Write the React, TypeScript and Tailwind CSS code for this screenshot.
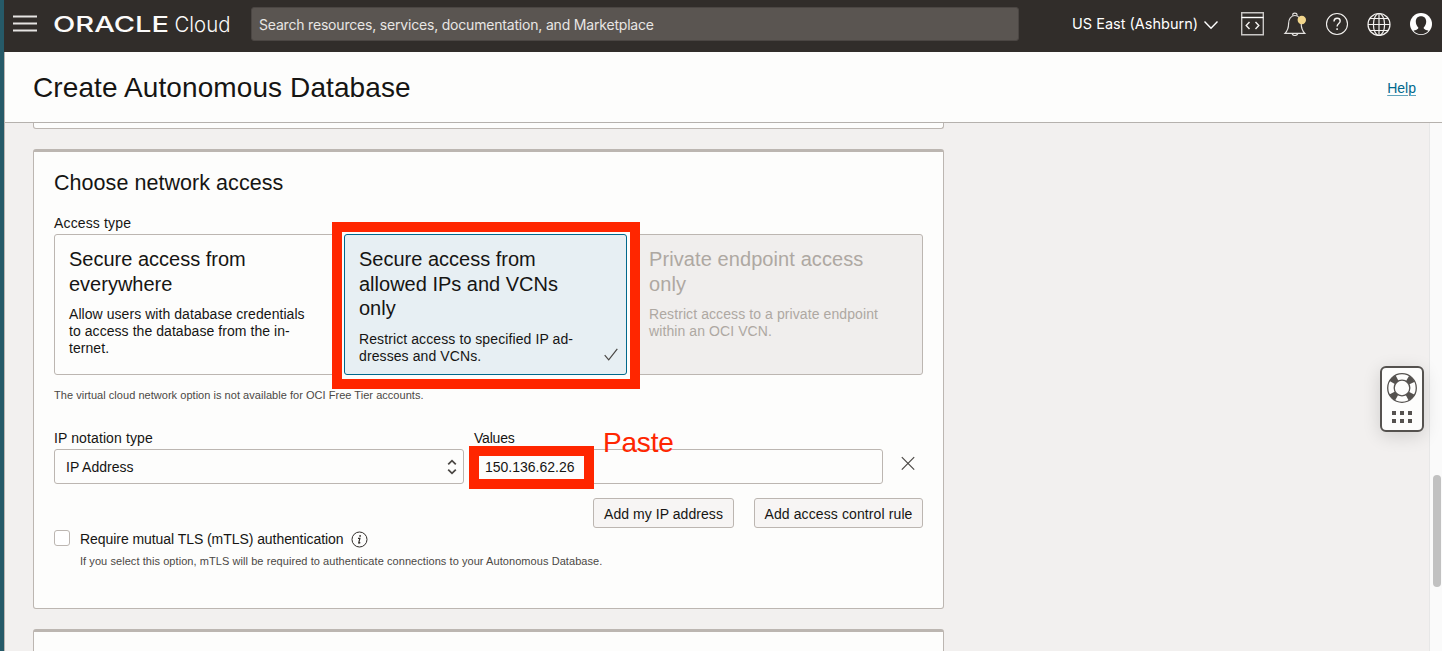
import type { ReactNode } from 'react';

function Logo() {
  return (
    <svg className="overflow-visible" width="182" height="28" viewBox="0 0 182 28" fill="#fcfbfa" role="img" aria-label="Oracle Cloud">
      <text x="0" y="20" textLength="116" lengthAdjust="spacingAndGlyphs" className="font-['Inter'] text-[21px] font-medium">
        ORACLE
      </text>
      <text x="121.500" y="20" textLength="56" lengthAdjust="spacingAndGlyphs" className="font-['Inter'] text-[21.5px] font-light">
        Cloud
      </text>
    </svg>
  );
}

function TopBar() {
  return (
    <header className="flex h-[52px] shrink-0 items-start bg-[#312d2a] pl-[9px] text-white">
      <svg className="mt-3 shrink-0" width="24" height="24" viewBox="0 0 24 24" stroke="#e6e4e2" strokeWidth="2">
        <path d="M0 4.500h24M0 11.500h24M0 18.500h24" />
      </svg>
      <div className="ml-4 mt-3 w-[182px] shrink-0">
        <Logo />
      </div>
      <div className="ml-4 mt-[7px] flex h-[34px] w-[768px] shrink-0 items-center rounded-[3px] border border-[#4b4643] bg-[#5a5551] pl-[7px] pt-px font-['Inter',sans-serif] text-sm tracking-[-0.19px] text-[#e8e6e4]">
        Search resources, services, documentation, and Marketplace
      </div>
      <div className="ml-[53px] mt-3 flex shrink-0 items-center gap-[6px]">
        <span className="w-[126px] whitespace-nowrap font-['Inter',sans-serif] text-[14.5px] leading-6">US East (Ashburn)</span>
        <svg width="14" height="24" viewBox="0 0 14 24" fill="none" stroke="#fff" strokeWidth="1.4">
          <path d="M.5 9.500 7 16.300l6.500-6.800" />
        </svg>
      </div>
      <div className="ml-[22px] mt-3 flex shrink-0 gap-[18px]">
        <svg width="24" height="24" viewBox="0 0 24 24" fill="none" stroke="#c9c7c5" strokeWidth="1.400">
          <path d="M1.700.700h21.600v22.100H1.700z" />
          <path d="M1.500 5.500h22" stroke="#fff" />
          <path d="m9.500 10-3.300 3.500 3.300 3.500M15.500 10l3.300 3.500-3.300 3.500" stroke="#f4f2f0" />
        </svg>
        <svg className="ml-px" width="24" height="24" viewBox="0 0 24 24" fill="none" stroke="#e4e2e0" strokeWidth="1.200">
          <path d="M2 21.300h19.800c-3.200-3.200-3.600-6-3.600-9.800 0-4-2.200-8-6.300-8s-6.300 4-6.300 8c0 3.800-.4 6.600-3.600 9.800z" />
          <path d="M9.800 3.800V2.600c0-1 .8-1.500 2.100-1.500s2.100.5 2.100 1.500v1.200M9 21.500c.4 1.400 1.400 2 2.900 2s2.500-.6 2.900-2" />
          <circle cx="18.800" cy="8" r="4.200" fill="#f2d68c" stroke="none" />
        </svg>
        <svg width="24" height="24" viewBox="0 0 24 24" fill="none" stroke="#f4f2f0" strokeWidth="1.100">
          <circle cx="12" cy="12" r="10.500" />
          <path d="M9 9.500c0-2 1.200-3.200 3.100-3.200 1.800 0 3.100 1 3.100 2.700 0 2.400-3.100 2.700-3.100 5.500" strokeWidth="1.400" />
          <path d="M12.100 16.300v1.700" strokeWidth="1.500" />
        </svg>
        <svg width="24" height="24" viewBox="0 0 24 24" fill="none" stroke="#f4f2f0" strokeWidth="1.200">
          <circle cx="12" cy="12.500" r="11" />
          <ellipse cx="12" cy="12.500" rx="5.600" ry="11" />
          <path d="M12 1.500v22M1 12.500h22M3 6.500h18M3 18.500h18" />
        </svg>
        <svg width="24" height="24" viewBox="0 0 24 24">
          <circle cx="12" cy="12" r="11" fill="#fff" />
          <path d="M12 4.200c-3.300 0-5.200 2.200-5.200 5.300 0 2.300.9 4.600 2.500 5.900.2 1.300-.5 1.900-4.800 3.300 1.800 2.200 4.500 3.500 7.500 3.500s5.700-1.300 7.500-3.500c-4.300-1.400-5-2-4.800-3.300 1.600-1.300 2.500-3.600 2.500-5.900 0-3.100-1.900-5.300-5.200-5.300z" fill="#312d2a" />
        </svg>
      </div>
    </header>
  );
}

function AccessTile({ title, tone, width, children }: { title: ReactNode; tone: string; width: string; children: ReactNode }) {
  return (
    <div className={`relative h-[141px] shrink-0 rounded-[3px] border pl-[14px] pt-3 ${tone} ${width}`}>
      <h3 className="text-xl leading-[24.5px]">{title}</h3>
      {children}
    </div>
  );
}

function Highlight({ className }: { className: string }) {
  return <div className={`pointer-events-none absolute border-[10px] border-[#ff2600] ${className}`} />;
}

function NetworkAccess() {
  return (
    <section className="h-[460px] shrink-0 rounded-[3px] border border-t-[3px] border-[#bcb6b1] bg-[#fdfdfc] pl-5 pt-4">
      <h2 className="text-[21.5px] leading-[30px] tracking-[0.05px]">Choose network access</h2>
      <p className="mb-px mt-[15px] text-sm leading-5 tracking-[0.15px]">Access type</p>
      <div className="relative flex">
        <AccessTile title={<>Secure access from<br />everywhere</>} tone="border-[#bcb6b1]" width="mr-[6px] w-[284px]">
          <p className="mt-[10px] text-sm leading-[17px] tracking-[0.06px]">
            Allow users with database credentials<br />to access the database from the in-<br />ternet.
          </p>
        </AccessTile>
        <AccessTile title={<>Secure access from<br />allowed IPs and VCNs<br />only</>} tone="border-[#00688c] bg-[#e7eff3]" width="mr-[7px] w-[283px]">
          <p className="mt-[10px] text-sm leading-[17px] tracking-[0.1px]">
            Restrict access to specified IP ad-<br />dresses and VCNs.
          </p>
          <svg className="absolute bottom-[13px] right-[8px]" width="14" height="13" viewBox="0 0 14 13" fill="none" stroke="#4a4744" strokeWidth="1.200">
            <path d="M.7 7.200 4.700 11.800 13.300.800" />
          </svg>
        </AccessTile>
        <AccessTile title={<>Private endpoint access<br />only</>} tone="border-[#bcb6b1] bg-[#f0eeed] text-[#aea8a2] tracking-[0.09px]" width="w-[289px]">
          <p className="mt-[10px] text-sm leading-[17px]">
            Restrict access to a private endpoint<br />within an OCI VCN.
          </p>
        </AccessTile>
        <Highlight className="-top-3 left-[278px] h-[167px] w-[308px]" />
      </div>
      <p className="mt-3 text-[11px] leading-4 tracking-[0.035px] text-[#4b4845]">
        The virtual cloud network option is not available for OCI Free Tier accounts.
      </p>

      <div className="mt-[25px] flex gap-[10px]">
        <div className="w-[410px]">
          <p className="mb-px text-sm leading-5 tracking-[0.11px]">IP notation type</p>
          <div className="flex h-[35px] items-center justify-between rounded-[3px] border border-[#bcb6b1] pl-[11px] pr-[6px] text-sm">
            <span>IP Address</span>
            <svg width="10" height="16" viewBox="0 0 10 16" fill="none" stroke="#4b4845" strokeWidth="1.800">
              <path d="M1.200 5.300 5 1.700l3.800 3.600M1.200 10.700 5 14.300l3.800-3.600" />
            </svg>
          </div>
        </div>
        <div className="w-[409px]">
          <p className="mb-px text-sm leading-5 tracking-[-0.2px]">Values</p>
          <div className="relative flex h-[35px] items-center rounded-[3px] border border-[#bcb6b1] pl-[10px] text-sm">
            <span>150.136.62.26</span>
            <Highlight className="-left-[6px] -top-[4px] h-[43px] w-[125px]" />
            <span className="absolute left-[128px] -top-[23px] text-[28px] leading-8 tracking-[-0.2px] text-[#ff2600]">Paste</span>
          </div>
        </div>
        <svg className="ml-2 mt-7" width="14" height="14" viewBox="0 0 14 14" stroke="#4b4845" strokeWidth="1.200">
          <path d="m.8 1.200 12.400 12.400M13.200 1.200.800 13.600" />
        </svg>
      </div>

      <div className="mt-[14px] flex justify-end gap-5 pr-5 text-sm">
        <button className="h-[30px] w-[141px] rounded-[3px] border border-[#bcb6b1] bg-[#f7f5f4] pt-px tracking-[0.05px]">Add my IP address</button>
        <button className="h-[30px] w-[169px] rounded-[3px] border border-[#bcb6b1] bg-[#f7f5f4] pt-px tracking-[0.11px]">Add access control rule</button>
      </div>

      <div className="mt-px flex">
        <span className="mt-px h-4 w-4 rounded-[3px] border border-[#bcb6b1] bg-white" />
        <div className="ml-[10px]">
          <div className="flex h-5 items-center">
            <span className="text-sm leading-5 tracking-[-0.06px]">Require mutual TLS (mTLS) authentication</span>
            <svg className="ml-2 mt-px" width="17" height="17" viewBox="0 0 17 17" fill="none" stroke="#312d2a">
              <circle cx="8.500" cy="8.500" r="7.500" />
              <path d="M7 7.300h1.900l-1.200 4.500c-.1.500.5.400 1.600-.3" strokeWidth="1.200" />
              <circle cx="9.100" cy="4.900" r=".9" fill="#312d2a" stroke="none" />
            </svg>
          </div>
          <p className="mt-1 text-[11px] leading-4 tracking-[0.066px] text-[#4b4845]">
            If you select this option, mTLS will be required to authenticate connections to your Autonomous Database.
          </p>
        </div>
      </div>
    </section>
  );
}

function SupportWidget() {
  return (
    <div className="absolute right-[18px] top-[366px] flex h-[66px] w-11 flex-col items-center rounded-md border-2 border-[#55524f] bg-[#fdfdfc] pt-[5px] shadow-[0_4px_18px_rgba(0,0,0,0.14)]">
      <svg width="30" height="30" viewBox="0 0 30 30" fill="none" stroke="#55524f">
        <circle cx="15" cy="15" r="11" strokeWidth="6.500" strokeDasharray="6.400 10.880" strokeDashoffset="-5.440" />
        <circle cx="15" cy="15" r="14.300" strokeWidth="1.300" />
        <circle cx="15" cy="15" r="7.800" strokeWidth="1.300" />
      </svg>
      <svg className="mt-2" width="20" height="12" viewBox="0 0 20 12" fill="#55524f">
        <path d="M0 0h4v4H0zM8 0h4v4H8zM16 0h4v4h-4zM0 8h4v4H0zM8 8h4v4H8zM16 8h4v4h-4z" />
      </svg>
    </div>
  );
}

export default function App() {
  return (
    <div className="relative flex h-[651px] w-[1442px] overflow-hidden bg-[#f2f0ef] font-['Liberation_Sans',Arial,sans-serif] text-[#161513]">
      <div className="w-1 shrink-0 bg-[#265a68]" />
      <div className="flex min-w-0 flex-1 flex-col">
        <TopBar />
        <div className="flex min-h-0 flex-1 flex-col border-l border-[#bcb6b1]">
          <div className="flex h-[71px] shrink-0 items-center justify-between border-b border-[#b5b1ad] bg-[#fdfdfc] pl-7 pr-[26px]">
            <h1 className="pt-[2px] text-[28px] leading-9 tracking-[0.1px]">Create Autonomous Database</h1>
            <a className="pt-px text-sm leading-5 text-[#00688c] underline decoration-[#5fa3bb] decoration-1 underline-offset-2">Help</a>
          </div>
          <div className="flex min-h-0 flex-1 justify-between">
            <main className="ml-7 flex w-[911px] flex-col overflow-hidden">
              <div className="h-[6px] shrink-0 rounded-b-[3px] border border-t-0 border-[#bcb6b1] bg-[#fdfdfc]" />
              <div className="h-5 shrink-0" />
              <NetworkAccess />
              <div className="mt-5 h-12 shrink-0 rounded-t-[3px] border border-t-[3px] border-[#bcb6b1] bg-[#fdfdfc]" />
            </main>
            <div className="w-[13px] border-l border-[#e7e7e7] bg-[#fafafa] pl-[3px] pt-[352px]">
              <div className="h-28 w-2 rounded-full bg-[#c1c1c1]" />
            </div>
          </div>
        </div>
      </div>
      <SupportWidget />
    </div>
  );
}
